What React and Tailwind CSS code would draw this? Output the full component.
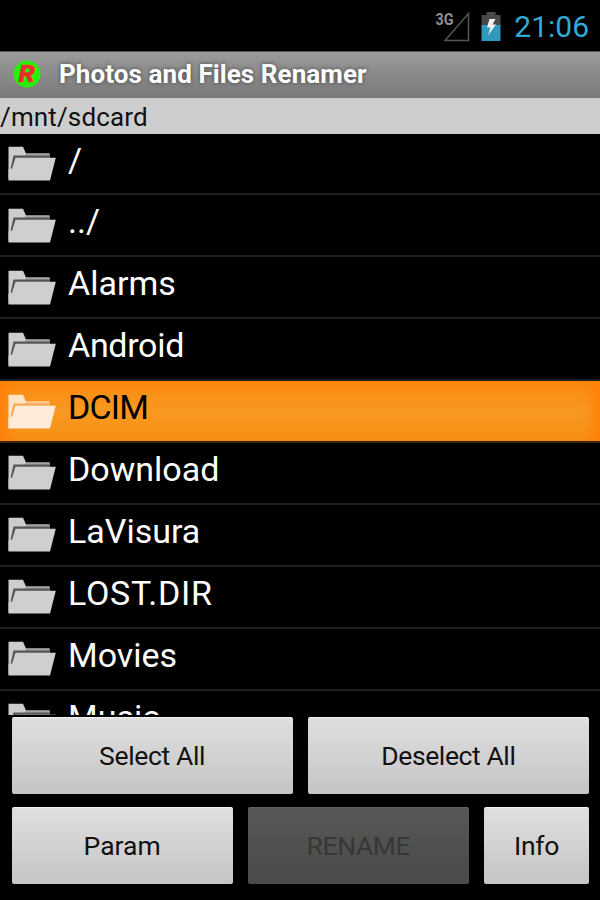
import React from 'react';
import clsx from 'clsx';

const folders = [
  { name: '/' },
  { name: '../' },
  { name: 'Alarms' },
  { name: 'Android', tracking: 'tracking-[-0.3px]' },
  { name: 'DCIM', tracking: 'tracking-[-0.8px]' },
  { name: 'Download' },
  { name: 'LaVisura' },
  { name: 'LOST.DIR', tracking: 'tracking-[0.7px]' },
  { name: 'Movies' },
  { name: 'Music' },
];

const FolderIcon = ({ active }) => (
  <svg width="48" height="36" viewBox="0 0 48 36" className="mt-[12.5px] ml-2 shrink-0">
    <path d="M0.5 0.8H15L18 7.5H41.5V12H6L3.5 24L0.5 34Z" fill={active ? '#ffe4c8' : '#cdcdcd'} />
    <path d="M18 7.5H41.5V10H17Z" fill={active ? '#ffc891' : '#a3a3a3'} />
    <path d="M5.5 9.5H41.5V12H8L5 22.5H2.6Z" fill={active ? '#f5a855' : '#565656'} />
    <path d="M7.5 11.8H47.8L42 34.5H0.5V23.5L4 23Z" fill={active ? '#ffebd8' : '#cecfcf'} />
  </svg>
);

const FolderRow = ({ name, tracking, active }) => (
  <li
    className={clsx(
      'h-[61.9px] shrink-0 flex items-start border-b-2',
      active
        ? 'border-[#3a2408] text-black bg-linear-to-b from-[#fb8a10] via-[#f8981f] to-[#f89016] shadow-[inset_0_2px_2px_#ff8708,inset_14px_0_14px_-8px_#ff7d08,inset_-14px_0_14px_-8px_#ff7d08]'
        : 'border-[#1f1f1f] text-white'
    )}
  >
    <FolderIcon active={active} />
    <span className={clsx('ml-3 text-[34px] leading-[52px]', tracking)}>{name}</span>
  </li>
);

const Button = ({ children, className, disabled }) => (
  <button
    disabled={disabled}
    className={clsx(
      'h-[77px] rounded-[2px] text-[26.5px] border-t',
      disabled
        ? 'bg-linear-to-b from-[#565856] to-[#4a4b49] border-[#626462] text-[#373737]'
        : 'bg-linear-to-b from-[#dfdfdf] to-[#c5c5c5] border-[#f2f2f2] text-[#111111]',
      className
    )}
  >
    {children}
  </button>
);

const StatusBar = () => (
  <div className="h-[51px] shrink-0 flex items-start justify-end pr-[11px]">
    <svg width="36" height="32" viewBox="0 0 36 32" className="mt-[11px] mr-[10px]">
      <path d="M10 29.5L33.5 2.5V29.5Z" fill="none" stroke="#555555" strokeWidth="1.5" />
      <text x="0.5" y="13.5" fontFamily="Roboto, sans-serif" fontWeight="700" fontSize="16.5" textLength="18" lengthAdjust="spacingAndGlyphs" fill="#8f8f8f">3G</text>
    </svg>
    <svg width="20" height="30" viewBox="0 0 20 30" className="mt-3 mr-[13px]">
      <path d="M0.5 3H5.5V0H14.5V3H19.5V13.5H0.5Z" fill="#494949" />
      <path d="M0.5 13H19.5V29H0.5Z" fill="#2f9abd" />
      <path d="M8.5 7H14.5L11.5 12.5H15L7 23.5L9.5 15.5H6Z" fill="#f2f2f2" />
    </svg>
    <span className="text-[30px] leading-[54px] text-[#33a9d5]">21:06</span>
  </div>
);

const App = () => {
  return (
    <div className="w-[600px] h-[900px] bg-black flex flex-col overflow-hidden font-[Roboto,sans-serif]">
      <StatusBar />

      {/* Title bar */}
      <header className="h-[47px] shrink-0 flex items-center pb-0.5 bg-linear-to-b from-[#9b9b9b] to-[#797979] border-t border-[#555555]">
        <svg width="28" height="28" viewBox="0 0 28 28" className="ml-[13px]">
          <circle cx="14" cy="14" r="13.6" fill="#28f00c" />
          <text x="5.5" y="22" fontFamily="Roboto, sans-serif" fontWeight="900" fontStyle="italic" fontSize="23.5" textLength="16.5" lengthAdjust="spacingAndGlyphs" fill="#e8312b" stroke="#e8312b" strokeWidth="0.4">R</text>
        </svg>
        <h1 className="ml-[18px] text-[26px] leading-none font-bold tracking-[0.08px] text-white [text-shadow:0_0_4px_#444]">Photos and Files Renamer</h1>
      </header>

      {/* Current path */}
      <div className="h-[35.5px] shrink-0 bg-[#cecece] text-[26px] leading-[38px] tracking-[0.15px] text-[#111111]">/mnt/sdcard</div>

      <ul className="h-[581.5px] shrink-0 overflow-hidden flex flex-col">
        {folders.map(({ name, tracking }) => (
          <FolderRow key={name} name={name} tracking={tracking} active={name === 'DCIM'} />
        ))}
      </ul>

      {/* Actions */}
      <div className="pt-0.5 pl-[11.5px] pr-[11px] flex flex-col gap-[13px]">
        <div className="flex gap-[15px]">
          <Button className="flex-1 tracking-[-0.35px]">Select All</Button>
          <Button className="flex-1 tracking-[-0.4px]">Deselect All</Button>
        </div>
        <div className="flex gap-[15px]">
          <Button className="flex-1">Param</Button>
          <Button className="flex-1 tracking-[-0.4px]" disabled>RENAME</Button>
          <Button className="w-[105px] tracking-[-0.3px]">Info</Button>
        </div>
      </div>
    </div>
  );
};

export default App;
